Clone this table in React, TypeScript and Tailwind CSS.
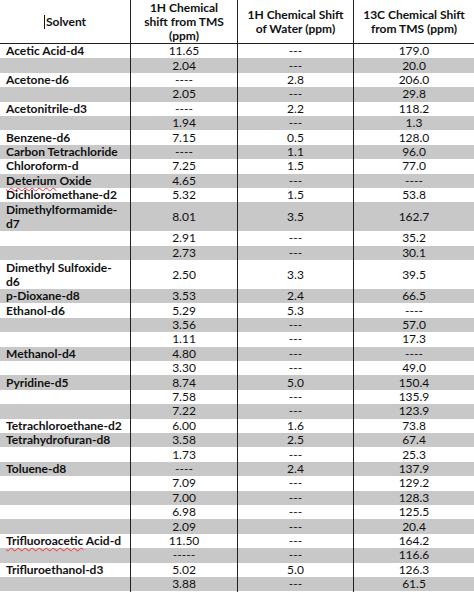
import React from "react";

type Row = {
  name?: React.ReactNode;
  h1: string;
  water: string;
  c13: string;
  tall?: boolean;
};

const squiggle = "underline decoration-wavy decoration-red-500 decoration-1 underline-offset-2";

const rows: Row[] = [
  { name: "Acetic Acid-d4", h1: "11.65", water: "---", c13: "179.0" },
  { h1: "2.04", water: "---", c13: "20.0" },
  { name: "Acetone-d6", h1: "----", water: "2.8", c13: "206.0" },
  { h1: "2.05", water: "---", c13: "29.8" },
  { name: "Acetonitrile-d3", h1: "----", water: "2.2", c13: "118.2" },
  { h1: "1.94", water: "---", c13: "1.3" },
  { name: "Benzene-d6", h1: "7.15", water: "0.5", c13: "128.0" },
  { name: "Carbon Tetrachloride", h1: "----", water: "1.1", c13: "96.0" },
  { name: "Chloroform-d", h1: "7.25", water: "1.5", c13: "77.0" },
  {
    name: (
      <span>
        <span className={squiggle}>Deterium</span> Oxide
      </span>
    ),
    h1: "4.65",
    water: "---",
    c13: "----",
  },
  { name: "Dichloromethane-d2", h1: "5.32", water: "1.5", c13: "53.8" },
  {
    name: (
      <span>
        Dimethylformamide-
        <br />
        d7
      </span>
    ),
    h1: "8.01",
    water: "3.5",
    c13: "162.7",
    tall: true,
  },
  { h1: "2.91", water: "---", c13: "35.2" },
  { h1: "2.73", water: "---", c13: "30.1" },
  {
    name: (
      <span>
        Dimethyl Sulfoxide-
        <br />
        d6
      </span>
    ),
    h1: "2.50",
    water: "3.3",
    c13: "39.5",
    tall: true,
  },
  { name: "p-Dioxane-d8", h1: "3.53", water: "2.4", c13: "66.5" },
  { name: "Ethanol-d6", h1: "5.29", water: "5.3", c13: "----" },
  { h1: "3.56", water: "---", c13: "57.0" },
  { h1: "1.11", water: "---", c13: "17.3" },
  { name: "Methanol-d4", h1: "4.80", water: "---", c13: "----" },
  { h1: "3.30", water: "---", c13: "49.0" },
  { name: "Pyridine-d5", h1: "8.74", water: "5.0", c13: "150.4" },
  { h1: "7.58", water: "---", c13: "135.9" },
  { h1: "7.22", water: "---", c13: "123.9" },
  { name: "Tetrachloroethane-d2", h1: "6.00", water: "1.6", c13: "73.8" },
  { name: "Tetrahydrofuran-d8", h1: "3.58", water: "2.5", c13: "67.4" },
  { h1: "1.73", water: "---", c13: "25.3" },
  { name: "Toluene-d8", h1: "----", water: "2.4", c13: "137.9" },
  { h1: "7.09", water: "---", c13: "129.2" },
  { h1: "7.00", water: "---", c13: "128.3" },
  { h1: "6.98", water: "---", c13: "125.5" },
  { h1: "2.09", water: "---", c13: "20.4" },
  {
    name: (
      <span>
        <span className={squiggle}>Trifluoroacetic</span> Acid-d
      </span>
    ),
    h1: "11.50",
    water: "---",
    c13: "164.2",
  },
  { h1: "-----", water: "---", c13: "116.6" },
  { name: "Trifluroethanol-d3", h1: "5.02", water: "5.0", c13: "126.3" },
  { h1: "3.88", water: "---", c13: "61.5" },
];

const cols = "grid grid-cols-[131px_107px_116px_120px]";
const divider = "border-r border-[#222]";

export default function App() {
  return (
    <div
      className="w-[474px] h-[592px] overflow-hidden bg-white text-[#111] text-[12px] leading-[14px]"
      style={{ fontFamily: "Lato, 'Noto Sans', sans-serif" }}
    >
      {/* header */}
      <div className={`${cols} h-[44px] border-b border-[#222] font-bold text-center`}>
        <div className={`${divider} flex items-center justify-center`}>
          <span className="inline-block w-px h-[14px] bg-[#111] mr-px" />
          Solvent
        </div>
        <div className={`${divider} flex items-center justify-center`}>
          <span>
            1H Chemical
            <br />
            shift from TMS
            <br />
            (ppm)
          </span>
        </div>
        <div className={`${divider} flex items-center justify-center`}>
          <span>
            1H Chemical Shift
            <br />
            of Water (ppm)
          </span>
        </div>
        <div className="flex items-center justify-center">
          <span>
            13C Chemical Shift
            <br />
            from TMS (ppm)
          </span>
        </div>
      </div>

      {/* body */}
      {rows.map((r, i) => (
        <div
          key={i}
          className={`${cols} ${r.tall ? "h-[29px]" : "h-[14.4px]"} ${
            i % 2 === 1 ? "bg-[#c8c8c8]" : "bg-white"
          }`}
        >
          <div className={`${divider} flex items-center pl-[6px] font-bold whitespace-nowrap`}>
            {r.name}
          </div>
          <div className={`${divider} flex items-center justify-center`}>{r.h1}</div>
          <div className={`${divider} flex items-center justify-center`}>{r.water}</div>
          <div className="flex items-center justify-center">{r.c13}</div>
        </div>
      ))}
      <div className={`${cols} h-[20px]`}>
        <div className={divider} />
        <div className={divider} />
        <div className={divider} />
        <div />
      </div>
    </div>
  );
}
